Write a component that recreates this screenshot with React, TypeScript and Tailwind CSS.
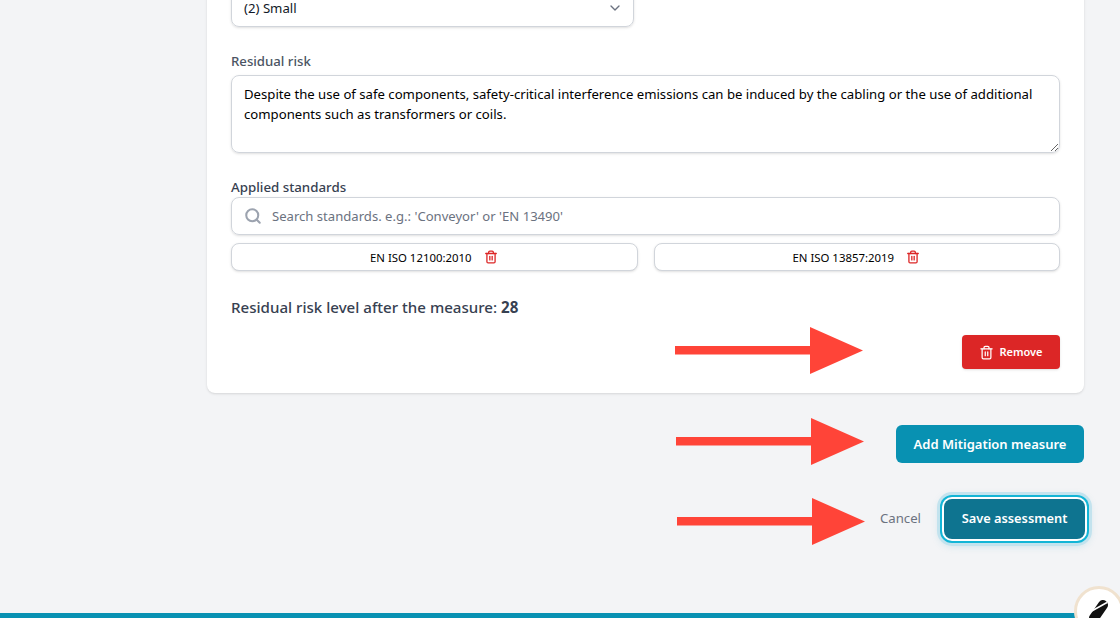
import { ChevronDown, Search, Trash2 } from 'lucide-react'

function Arrow({ className }: { className: string }) {
  return (
    <svg className={className} width="190" height="48" viewBox="0 0 190 48" fill="#ff4438">
      <path d="M0 19H135V0L188 23.5L135 47V27.5H0Z" />
    </svg>
  )
}

function StandardChip({ name }: { name: string }) {
  return (
    <div className="h-7 flex items-center justify-center gap-2 rounded-lg border border-[#d1d5db] bg-white shadow-sm text-[11.4px] text-black">
      <span className="pt-px">{name}</span>
      <Trash2 className="w-[14px] h-[14px] ml-[4px] mr-[1px] text-[#dc2626]" strokeWidth={2.25} />
    </div>
  )
}

export default function App() {
  return (
    <div className="relative h-[618px] overflow-hidden bg-[#f3f4f6] font-['Noto_Sans','Open_Sans',sans-serif] flex flex-col">
      <main className="flex-1 pl-[207px] pr-9 -mt-[30px]">
        {/* Measure card */}
        <div className="bg-white rounded-lg shadow-sm px-6 pb-6 h-[423px] flex flex-col">
          <div className="w-[403px] h-[38px] mt-[19px] flex items-center justify-between rounded-lg border border-[#d1d5db] shadow-sm pl-3 pr-[10px] text-[13.2px] text-[#111827]">
            <span className="pt-0.5">(2) Small</span>
            <ChevronDown className="w-4 h-4 text-[#6b7280]" />
          </div>

          <label className="block mt-6 text-[13.2px] leading-5 font-medium text-[#4b5563]">Residual risk</label>
          <textarea
            className="block w-full h-[78px] mt-1 rounded-lg border border-[#d1d5db] shadow-sm px-3 py-2 text-[13.17px] leading-5 text-black outline-none"
            defaultValue="Despite the use of safe components, safety-critical interference emissions can be induced by the cabling or the use of additional components such as transformers or coils."
          />

          <label className="block mt-6 text-[13.3px] leading-5 font-medium text-[#374151]">Applied standards</label>
          <div className="h-[38px] flex items-center rounded-lg border border-[#d1d5db] shadow-sm">
            <Search className="w-[18px] h-[18px] ml-3 text-[#9ca3af]" strokeWidth={2.75} />
            <input
              className="flex-1 ml-[10px] pt-px text-[13.1px] text-black outline-none placeholder:text-[#6b7280]"
              placeholder="Search standards. e.g.: 'Conveyor' or 'EN 13490'"
            />
          </div>
          <div className="grid grid-cols-2 gap-4 mt-2">
            <StandardChip name="EN ISO 12100:2010" />
            <StandardChip name="EN ISO 13857:2019" />
          </div>

          <p className="mt-[25px] text-[15.1px] leading-[22px] font-medium text-[#374151]">
            Residual risk level after the measure: <span className="font-bold">28</span>
          </p>

          <div className="flex justify-end mt-[17px]">
            <button className="w-[98px] h-[34px] flex items-center justify-center gap-[5px] rounded bg-[#dc2626] shadow-sm text-[11px] font-semibold text-white">
              <Trash2 className="w-[15px] h-[15px]" />
              <span className="pt-px">Remove</span>
            </button>
          </div>
        </div>

        <div className="flex justify-end mt-8">
          <button className="w-[188px] h-[38px] pt-0.5 rounded-md bg-[#0891b2] text-[13px] font-semibold text-white">
            Add Mitigation measure
          </button>
        </div>

        <div className="flex justify-end items-center gap-[23px] mt-9">
          <button className="text-[13.2px] text-[#6b7280]">Cancel</button>
          <button className="w-[141px] h-10 -mr-px rounded-lg bg-[#0e7490] text-[12.8px] font-semibold text-white shadow-[0_0_0_2px_#ffffff,0_0_0_4px_#13b5d6,0_0_0_7px_#c3e3ee,0_2px_10px_4px_rgba(8,145,178,0.2)]">
            Save assessment
          </button>
        </div>
      </main>

      <footer className="h-[5px] bg-[#0891b2]" />

      {/* Annotation arrows */}
      <Arrow className="absolute left-[675px] top-[327px]" />
      <Arrow className="absolute left-[676px] top-[418px]" />
      <Arrow className="absolute left-[677px] top-[498px]" />

      {/* Help widget */}
      <div className="absolute left-[1074px] top-[586px] w-[50px] h-[50px] rounded-full bg-white border-[3px] border-[#f0e2cf]">
        <svg className="absolute left-[11px] top-[8px]" width="22" height="26" viewBox="0 0 22 26" fill="none">
          <path d="M6 21L15 8" stroke="#111111" strokeWidth="10" strokeLinecap="round" />
          <path d="M1 15.5L19 5.5" stroke="#ffffff" strokeWidth="1.5" />
        </svg>
      </div>
    </div>
  )
}
